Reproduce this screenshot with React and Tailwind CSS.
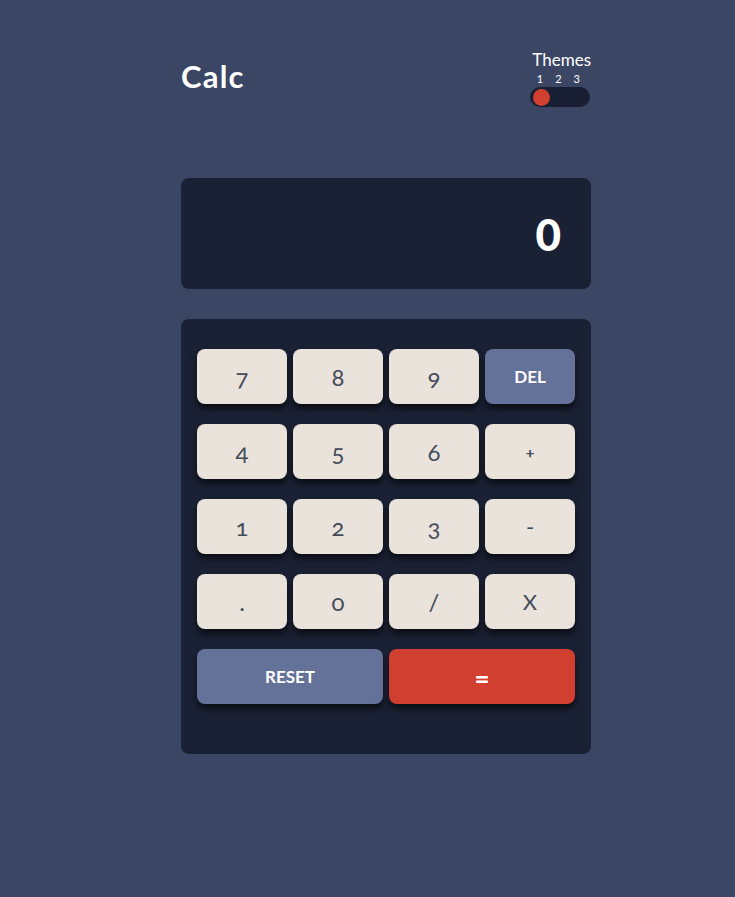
import React, { useState } from 'react';

const keys = [
    { label: '7' }, { label: '8' }, { label: '9' }, { label: 'DEL', kind: 'fn' },
    { label: '4' }, { label: '5' }, { label: '6' }, { label: '+', kind: 'plus' },
    { label: '1' }, { label: '2' }, { label: '3' }, { label: '-', kind: 'op' },
    { label: '.' }, { label: '0' }, { label: '/' }, { label: 'X', kind: 'op' },
];

const Key = ({ label, kind, onClick }) => {
    if (kind === 'fn') {
        return (
            <button onClick={onClick} className="h-[55px] rounded-lg bg-[#647198] text-white text-[17px] font-bold shadow-[0_5px_6px_rgba(0,0,0,0.6)]">
                {label}
            </button>
        );
    }
    const size = kind === 'plus' ? 'text-[16px] font-bold' : kind === 'op' ? 'text-[22px]' : 'text-[24px]';
    return (
        <button onClick={onClick} className={`h-[55px] rounded-lg bg-[#eae3dc] text-[#444b5a] shadow-[0_5px_6px_rgba(0,0,0,0.6)] ${size}`} style={{ fontVariantNumeric: 'oldstyle-nums' }}>
            {label}
        </button>
    );
};

const App = () => {
    const [value, setValue] = useState('0');

    const press = (label) => {
        if (label === 'DEL') {
            setValue(v => (v.length > 1 ? v.slice(0, -1) : '0'));
            return;
        }
        setValue(v => (v === '0' ? label : v + label));
    };

    return (
        <div className="min-h-[897px] w-full bg-[#3b4664] font-['Lato','Noto_Sans',sans-serif]">
            <div className="w-[410px] ml-[181px] pt-[51px]">
                <div className="flex justify-between items-start">
                    <h1 className="text-white text-[31px] font-bold tracking-[1.2px] mt-[10px] leading-none">Calc</h1>
                    <div className="flex flex-col items-end">
                        <span className="text-white text-[17px] leading-[18px]">Themes</span>
                        <div className="flex gap-[12px] pr-[11px] mt-[4px] text-white text-[11px] leading-[12px]">
                            <span>1</span><span>2</span><span>3</span>
                        </div>
                        <div className="mt-[2px] mr-[1px] w-[60px] h-[20px] rounded-full bg-[#181f33] flex items-center px-[3px]">
                            <div className="w-[17px] h-[17px] rounded-full bg-[#d03f2f]"></div>
                        </div>
                    </div>
                </div>

                <div className="mt-[71px] h-[111px] rounded-lg bg-[#1b2134] flex items-center justify-end pr-[30px]">
                    <span className="text-white text-[44px] font-black">{value}</span>
                </div>

                <div className="mt-[30px] rounded-lg bg-[#1b2134] px-4 pt-[30px] pb-[50px]">
                    <div className="grid grid-cols-4 gap-x-[6px] gap-y-[20px]">
                        {keys.map(k => (
                            <Key key={k.label} label={k.label} kind={k.kind} onClick={() => press(k.label)} />
                        ))}
                        <button onClick={() => setValue('0')} className="col-span-2 h-[55px] rounded-lg bg-[#647198] text-white text-[17px] font-bold shadow-[0_5px_6px_rgba(0,0,0,0.6)]">
                            RESET
                        </button>
                        <button className="col-span-2 h-[55px] rounded-lg bg-[#d03f2f] text-white text-[26px] font-bold pt-[4px] shadow-[0_5px_6px_rgba(0,0,0,0.6)]">
                            =
                        </button>
                    </div>
                </div>
            </div>
        </div>
    );
};

export default App;
